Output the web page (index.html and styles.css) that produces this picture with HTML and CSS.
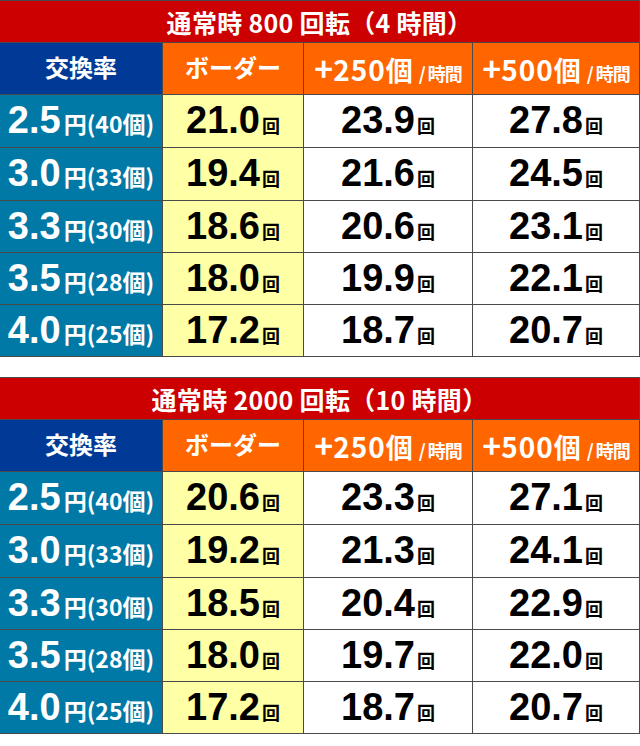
FILE: index.html
```html
<!DOCTYPE html>
<html lang="ja">
<head>
<meta charset="utf-8">
<link rel="stylesheet" href="styles.css">
</head>
<body>
<div class="page">
  <div class="tbl">
    <div class="title">通常時 800 回転（4 時間）</div>
    <div class="hd rate-hd">交換率</div>
    <div class="hd border-hd">ボーダー</div>
    <div class="hd"><span class="plus">+</span><span class="hn">250</span>個<span class="per">/ 時間</span></div>
    <div class="hd"><span class="plus">+</span><span class="hn">500</span>個<span class="per">/ 時間</span></div>

    <div class="rate"><span class="rn">2.5</span><span class="yen">円(40個)</span></div>
    <div class="cell border"><span class="num">21.0</span><span class="kai">回</span></div>
    <div class="cell"><span class="num">23.9</span><span class="kai">回</span></div>
    <div class="cell"><span class="num">27.8</span><span class="kai">回</span></div>

    <div class="rate"><span class="rn">3.0</span><span class="yen">円(33個)</span></div>
    <div class="cell border"><span class="num">19.4</span><span class="kai">回</span></div>
    <div class="cell"><span class="num">21.6</span><span class="kai">回</span></div>
    <div class="cell"><span class="num">24.5</span><span class="kai">回</span></div>

    <div class="rate"><span class="rn">3.3</span><span class="yen">円(30個)</span></div>
    <div class="cell border"><span class="num">18.6</span><span class="kai">回</span></div>
    <div class="cell"><span class="num">20.6</span><span class="kai">回</span></div>
    <div class="cell"><span class="num">23.1</span><span class="kai">回</span></div>

    <div class="rate"><span class="rn">3.5</span><span class="yen">円(28個)</span></div>
    <div class="cell border"><span class="num">18.0</span><span class="kai">回</span></div>
    <div class="cell"><span class="num">19.9</span><span class="kai">回</span></div>
    <div class="cell"><span class="num">22.1</span><span class="kai">回</span></div>

    <div class="rate"><span class="rn">4.0</span><span class="yen">円(25個)</span></div>
    <div class="cell border"><span class="num">17.2</span><span class="kai">回</span></div>
    <div class="cell"><span class="num">18.7</span><span class="kai">回</span></div>
    <div class="cell"><span class="num">20.7</span><span class="kai">回</span></div>
  </div>

  <div class="tbl">
    <div class="title">通常時 2000 回転（10 時間）</div>
    <div class="hd rate-hd">交換率</div>
    <div class="hd border-hd">ボーダー</div>
    <div class="hd"><span class="plus">+</span><span class="hn">250</span>個<span class="per">/ 時間</span></div>
    <div class="hd"><span class="plus">+</span><span class="hn">500</span>個<span class="per">/ 時間</span></div>

    <div class="rate"><span class="rn">2.5</span><span class="yen">円(40個)</span></div>
    <div class="cell border"><span class="num">20.6</span><span class="kai">回</span></div>
    <div class="cell"><span class="num">23.3</span><span class="kai">回</span></div>
    <div class="cell"><span class="num">27.1</span><span class="kai">回</span></div>

    <div class="rate"><span class="rn">3.0</span><span class="yen">円(33個)</span></div>
    <div class="cell border"><span class="num">19.2</span><span class="kai">回</span></div>
    <div class="cell"><span class="num">21.3</span><span class="kai">回</span></div>
    <div class="cell"><span class="num">24.1</span><span class="kai">回</span></div>

    <div class="rate"><span class="rn">3.3</span><span class="yen">円(30個)</span></div>
    <div class="cell border"><span class="num">18.5</span><span class="kai">回</span></div>
    <div class="cell"><span class="num">20.4</span><span class="kai">回</span></div>
    <div class="cell"><span class="num">22.9</span><span class="kai">回</span></div>

    <div class="rate"><span class="rn">3.5</span><span class="yen">円(28個)</span></div>
    <div class="cell border"><span class="num">18.0</span><span class="kai">回</span></div>
    <div class="cell"><span class="num">19.7</span><span class="kai">回</span></div>
    <div class="cell"><span class="num">22.0</span><span class="kai">回</span></div>

    <div class="rate"><span class="rn">4.0</span><span class="yen">円(25個)</span></div>
    <div class="cell border"><span class="num">17.2</span><span class="kai">回</span></div>
    <div class="cell"><span class="num">18.7</span><span class="kai">回</span></div>
    <div class="cell"><span class="num">20.7</span><span class="kai">回</span></div>
  </div>
</div>
</body>
</html>
```
FILE: styles.css
```css
html, body {
  margin: 0;
  padding: 0;
  background: #ffffff;
}
body {
  width: 640px;
  height: 746px;
  overflow: hidden;
  font-family: "Noto Sans CJK JP", "Liberation Sans", sans-serif;
}
.page {
  display: flex;
  flex-direction: column;
  gap: 20px;
}
.tbl {
  display: grid;
  grid-template-columns: 162px 140px 168px 166px;
  grid-template-rows: 41px 51px 52px 52px 51px 51px 51px;
  gap: 1px;
  padding: 1px 1px 1px 0;
  background: #4a4a4a;
  width: 639px;
}
.title {
  grid-column: 1 / 5;
  background: #cc0000;
  color: #fff;
  font-weight: 700;
  font-size: 25px;
  display: flex;
  align-items: center;
  justify-content: center;
  white-space: pre;
  letter-spacing: 0.3px;
}
.hd {
  background: #ff6600;
  color: #fff;
  font-weight: 700;
  font-size: 27px;
  display: flex;
  align-items: baseline;
  justify-content: center;
  padding-top: 4px;
  box-sizing: border-box;
  line-height: 40px;
}
.hd.rate-hd {
  background: #003a96;
  font-size: 24px;
}
.hd.border-hd {
  font-size: 24px;
}
.plus {
  font-size: 32px;
  line-height: 40px;
}
.hn {
  font-size: 28px;
  letter-spacing: 1px;
}
.per {
  font-size: 18px;
  margin-left: 6px;
  white-space: pre;
  letter-spacing: -1px;
}
.rate {
  background: #0079a6;
  color: #fff;
  display: flex;
  align-items: baseline;
  justify-content: center;
  line-height: 50px;
}
.rn {
  font-family: "Liberation Sans", Arial, sans-serif;
  font-weight: 700;
  font-size: 38px;
  margin-right: 3px;
}
.yen {
  font-weight: 700;
  font-size: 23px;
}
.cell {
  background: #ffffff;
  color: #000;
  display: flex;
  align-items: baseline;
  justify-content: center;
  line-height: 50px;
}
.cell.border {
  background: #ffffa6;
}
.num {
  font-family: "Liberation Sans", Arial, sans-serif;
  font-weight: 700;
  font-size: 38px;
}
.kai {
  font-weight: 700;
  font-size: 18px;
  margin-left: 2px;
}
```
